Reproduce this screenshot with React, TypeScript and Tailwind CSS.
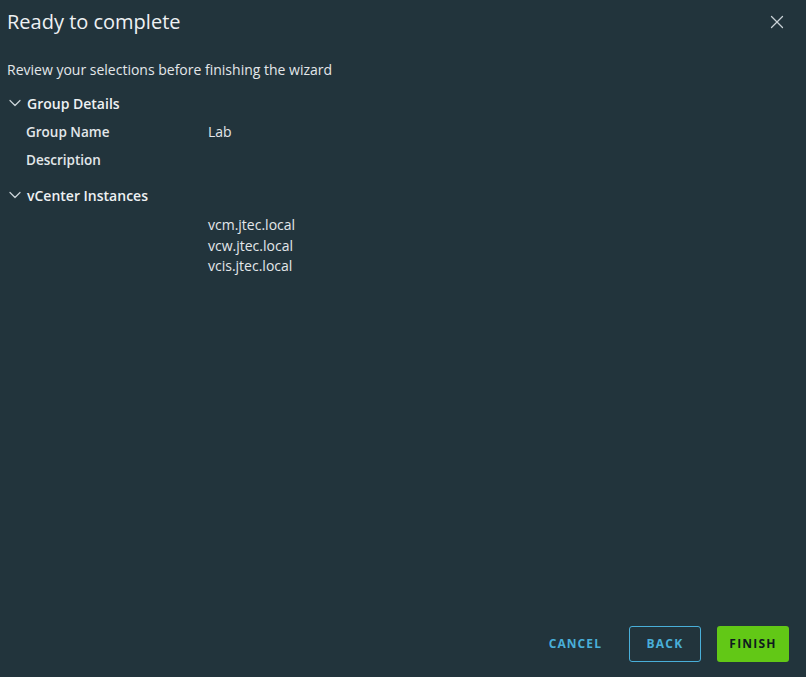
import { ChevronDown, X } from 'lucide-react';

const SECTIONS = [
  {
    title: 'Group Details',
    rows: [
      { label: 'Group Name', values: ['Lab'] },
      { label: 'Description', values: [] as string[] },
    ],
  },
  {
    title: 'vCenter Instances',
    rows: [{ label: '', values: ['vcm.jtec.local', 'vcw.jtec.local', 'vcis.jtec.local'] }],
  },
];

export default function App() {
  return (
    <div
      className="flex h-[677px] w-[806px] flex-col bg-[#22343c] text-[#e3e7ea]"
      style={{ fontFamily: '"Open Sans", "Liberation Sans", sans-serif' }}
    >
      <div className="flex items-center justify-between pl-[7px] pr-[18px] pt-[9px]">
        <h1 className="text-[20px] leading-[26px] font-normal text-[#eef1f3]">Ready to complete</h1>
        <button type="button" className="text-[#c9d1d6]">
          <X size={22} strokeWidth={1.4} />
        </button>
      </div>

      <p className="mt-[26px] pl-[7px] text-[14px] leading-[18px]">Review your selections before finishing the wizard</p>

      <div className="mt-[12px] flex flex-col">
        {SECTIONS.map((section, i) => (
          <div key={section.title} className={i > 0 ? 'mt-[11px]' : ''}>
            <div className="flex h-[24px] items-center pl-[5px]">
              <ChevronDown size={20} strokeWidth={1.5} className="text-[#c9d1d6]" />
              <span className="ml-[2px] text-[14px] font-semibold text-[#eef1f3]">{section.title}</span>
            </div>
            {section.rows.map((row, j) => (
              <div
                key={j}
                className={`flex pl-[26px] ${
                  !row.label ? 'mt-[8px]' : j === 0 ? 'mt-[5px] h-[24px] items-center' : 'mt-[4px] h-[24px] items-center'
                }`}
              >
                <div className="w-[182px] text-[13.5px] font-semibold">{row.label}</div>
                <div className="flex flex-col text-[14px] leading-[20.5px]">
                  {row.values.map((v) => (
                    <span key={v}>{v}</span>
                  ))}
                </div>
              </div>
            ))}
          </div>
        ))}
      </div>

      <div className="mt-auto flex items-center justify-end gap-[16px] pb-[15px] pr-[17px]">
        <button type="button" className="h-[36px] px-[11px] text-[12px] font-bold tracking-[0.09em] text-[#49afd9]">
          CANCEL
        </button>
        <button
          type="button"
          className="h-[36px] w-[72px] rounded-[3px] border border-[#49afd9] text-[12px] font-bold tracking-[0.1em] text-[#49afd9]"
        >
          BACK
        </button>
        <button
          type="button"
          className="h-[36px] w-[72px] rounded-[3px] bg-[#62c816] text-[12px] font-bold tracking-[0.1em] text-[#0f1a1f]"
        >
          FINISH
        </button>
      </div>
    </div>
  );
}
